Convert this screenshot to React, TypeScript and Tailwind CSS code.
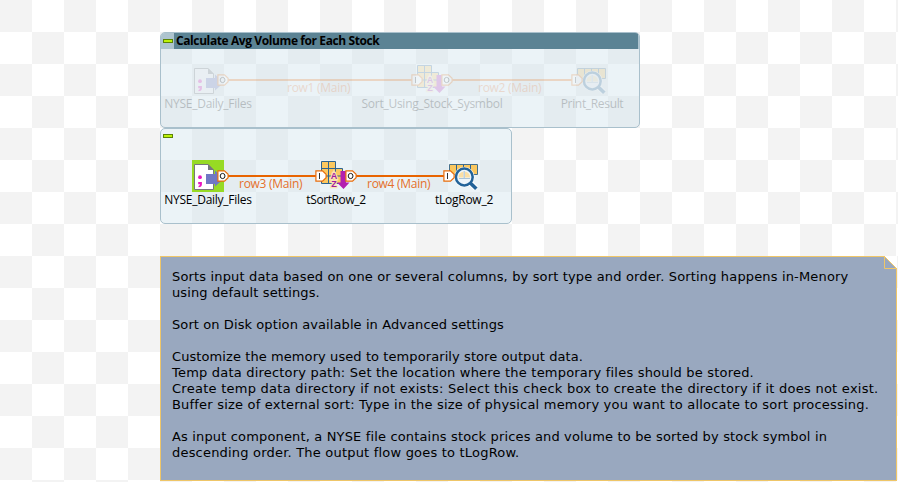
import React from "react";

const ORANGE = "#e86c0a";

function FileIcon() {
  return (
    <svg width="32" height="32" viewBox="0 0 32 32" className="block">
      <path d="M2.5 4.5H16L21.5 10V29.5H2.5Z" fill="#fff" stroke="#77777d" />
      <path d="M16 4L22 10H16Z" fill="#77777d" />
      <path d="M14 14h9v-3.5l9 8-9 8V24h-9Z" fill="#7077c4" />
      <circle cx="8" cy="17.2" r="1.9" fill="#e815c0" />
      <path d="M6.2 22h3.7v2.4q0 2.4-3.4 2.8v-1.3q1.5-.3 1.5-1.7H6.2Z" fill="#e815c0" />
    </svg>
  );
}

function SortIcon() {
  return (
    <svg width="32" height="32" viewBox="0 0 32 32" className="block">
      <path d="M1.5 1.5h14v7h7v15h-21Z" fill="#fbc860" />
      <path d="M1.5 23.5v-22h14v22M8.5 1.5v22M1.5 8.5h21v15M1.5 16h21M1.5 23.5h21" fill="none" stroke="#2e6490" />
      <g fill="#a01ca0" stroke="#fbe3b4" strokeWidth="2.5" paintOrder="stroke" fontSize="9" fontWeight="bold" textAnchor="middle" fontFamily="Liberation Sans, sans-serif">
        <text x="14" y="18.5">A</text>
        <text x="14" y="27">Z</text>
      </g>
      <path d="M20.500 11h5.500v11.500h3.500l-6 6.500-6.500-6.500h3.500Z" fill="#b31fb0" />
    </svg>
  );
}

function LogIcon() {
  return (
    <svg width="32" height="32" viewBox="0 0 32 32" className="block">
      <path d="M1.5 4.5h28v10h-28Z" fill="#fbc860" stroke="#46708c" />
      <path d="M8.5 4.5v10M15.5 4.5v10M22.5 4.5v10" stroke="#2e6490" />
      <circle cx="16.300" cy="17" r="10.300" fill="#fff" fillOpacity=".8" />
      <path d="M22.500 23l5.500 5.500" stroke="#fff" strokeWidth="5.500" />
      <path d="M22 22.700l6.300 6" stroke="#236399" strokeWidth="3.600" />
      <circle cx="16.300" cy="17" r="8.400" fill="#eef5fa" stroke="#236399" strokeWidth="2.500" />
      <path d="M10.500 17.500q0-5 5-6v6Zm6.500-6q5 1 5 6h-5Z" fill="#fbdfa4" />
      <path d="M11 18.500h11M16.200 11v7" stroke="#a9c3d7" />
    </svg>
  );
}

function Port({ kind }: { kind: "I" | "O" }) {
  return (
    <svg width="12" height="12" viewBox="0 0 12 12" className="block">
      <path d="M.9.9H7.5L11.1 4.2V7.8L7.5 11.1H.9Z" fill="#fff" stroke={ORANGE} strokeWidth="1.2" />
      {kind === "O" ? (
        <ellipse cx="5.6" cy="6" rx="2.4" ry="2.600" fill="none" stroke="#1b1b1b" strokeWidth="1" />
      ) : (
        <path d="M4.5 3v6" stroke="#333" strokeWidth="1" />
      )}
    </svg>
  );
}

const icons = { file: FileIcon, sort: SortIcon, log: LogIcon };

type NodeProps = {
  icon: keyof typeof icons;
  label: string;
  place: string;
  tracking: string;
  input?: boolean;
  output?: boolean;
  selected?: boolean;
};

function FlowNode({ icon, label, place, tracking, input, output, selected }: NodeProps) {
  const Icon = icons[icon];
  return (
    <div className={`absolute top-[31px] flex w-8 flex-col items-center ${place}`}>
      <div className={`relative size-8 ${selected ? "bg-[#97da24]" : ""}`}>
        <Icon />
        {input && <div className="absolute -left-[5px] top-[10px]"><Port kind="I" /></div>}
        {output && <div className="absolute left-[25px] top-[10px]"><Port kind="O" /></div>}
      </div>
      <span className={`whitespace-nowrap text-[12px] leading-4 text-black ${tracking}`}>{label}</span>
    </div>
  );
}

function Link({ place, label, labelPlace }: { place: string; label: string; labelPlace: string }) {
  return (
    <>
      <div className={`absolute top-[46px] h-[2px] bg-[#e86400] ${place}`} />
      <span className={`absolute top-[47px] whitespace-nowrap text-[12px] leading-4 tracking-[-0.27px] text-[#e4702b] ${labelPlace}`}>{label}</span>
    </>
  );
}

function Toggle() {
  return <div className="h-1 w-[10px] border border-[#5c8407] bg-[#bdf20a]" />;
}

const noteLines: [string, string][] = [
  ["Sorts input data based on one or several columns, by sort type and order. Sorting happens in-Menory", "tracking-[0.155px]"],
  ["using default settings.", "tracking-[0.12px]"],
  ["", ""],
  ["Sort on Disk option available in Advanced settings", "tracking-[0.09px]"],
  ["", ""],
  ["Customize the memory used to temporarily store output data.", "tracking-[0.085px]"],
  ["Temp data directory path: Set the location where the temporary files should be stored.", "tracking-[0.2px]"],
  ["Create temp data directory if not exists: Select this check box to create the directory if it does not exist.", "tracking-[0.26px]"],
  ["Buffer size of external sort: Type in the size of physical memory you want to allocate to sort processing.", "tracking-[0.2px]"],
  ["", ""],
  ["As input component, a NYSE file contains stock prices and volume to be sorted by stock symbol in", "tracking-[0.155px]"],
  ["descending order. The output flow goes to tLogRow.", "tracking-[0.2px]"],
];

export default function App() {
  return (
    <main className="h-[482px] w-[898px] overflow-hidden bg-[conic-gradient(#fff_25%,#f3f3f3_0_50%,#fff_0_75%,#f3f3f3_0)] bg-[length:64px_64px] pl-40 pt-8 font-['Open_Sans','Noto_Sans',sans-serif]">
      <section className="relative h-24 w-[480px] overflow-hidden rounded-[5px] border border-[#a9c0cc] bg-[#cde1eb]/40">
        <header className="-mx-px -mt-px flex h-[17px] items-center bg-[#aec4cf] pr-[2px]">
          <div className="flex w-[14px] justify-end pr-px"><Toggle /></div>
          <h1 className="flex h-full flex-1 items-center bg-[#5b8394] pl-[2px] text-[12px] font-bold leading-4 tracking-[-0.4px] whitespace-nowrap text-black">
            Calculate Avg Volume for Each Stock
          </h1>
        </header>
        <div className="opacity-20">
          <Link place="left-[67px] w-[184px]" label="row1 (Main)" labelPlace="left-[126px]" />
          <Link place="left-[291px] w-[120px]" label="row2 (Main)" labelPlace="left-[317px]" />
          <FlowNode icon="file" label="NYSE_Daily_Files" place="left-[31px]" tracking="tracking-[-0.27px]" output />
          <FlowNode icon="sort" label="Sort_Using_Stock_Sysmbol" place="left-[255px]" tracking="tracking-[-0.26px]" input output />
          <FlowNode icon="log" label="Print_Result" place="left-[415px]" tracking="tracking-[-0.33px]" input />
        </div>
      </section>
      <section className="relative h-24 w-[352px] rounded-[5px] border border-[#a9c0cc] bg-[#cde1eb]/40">
        <div className="pl-[2px] pt-[5px]"><Toggle /></div>
        <Link place="left-[67px] w-[88px]" label="row3 (Main)" labelPlace="left-[78px]" />
        <Link place="left-[195px] w-[88px]" label="row4 (Main)" labelPlace="left-[206px]" />
        <FlowNode icon="file" label="NYSE_Daily_Files" place="left-[31px]" tracking="tracking-[-0.27px]" output selected />
        <FlowNode icon="sort" label="tSortRow_2" place="left-[159px]" tracking="tracking-[-0.4px]" input output />
        <FlowNode icon="log" label="tLogRow_2" place="left-[287px]" tracking="tracking-[-0.25px]" input />
      </section>
      <article className="relative mt-8 h-[225px] w-[737px] border border-[#efc668] bg-[#99a8bf] pl-[11px] pt-3 font-['DejaVu_Sans',sans-serif] text-[13px] leading-4 text-black">
        {noteLines.map(([line, tracking], i) => (
          <p key={i} className={`h-4 whitespace-nowrap ${tracking}`}>{line}</p>
        ))}
        <svg width="13" height="13" viewBox="0 0 13 13" className="absolute -right-px -top-px">
          <path d="M0 0h13v13Z" fill="#fff" />
          <path d="M.5 0V12.5H13M.5.5L12.5 12.5" fill="none" stroke="#efc668" />
        </svg>
      </article>
    </main>
  );
}
